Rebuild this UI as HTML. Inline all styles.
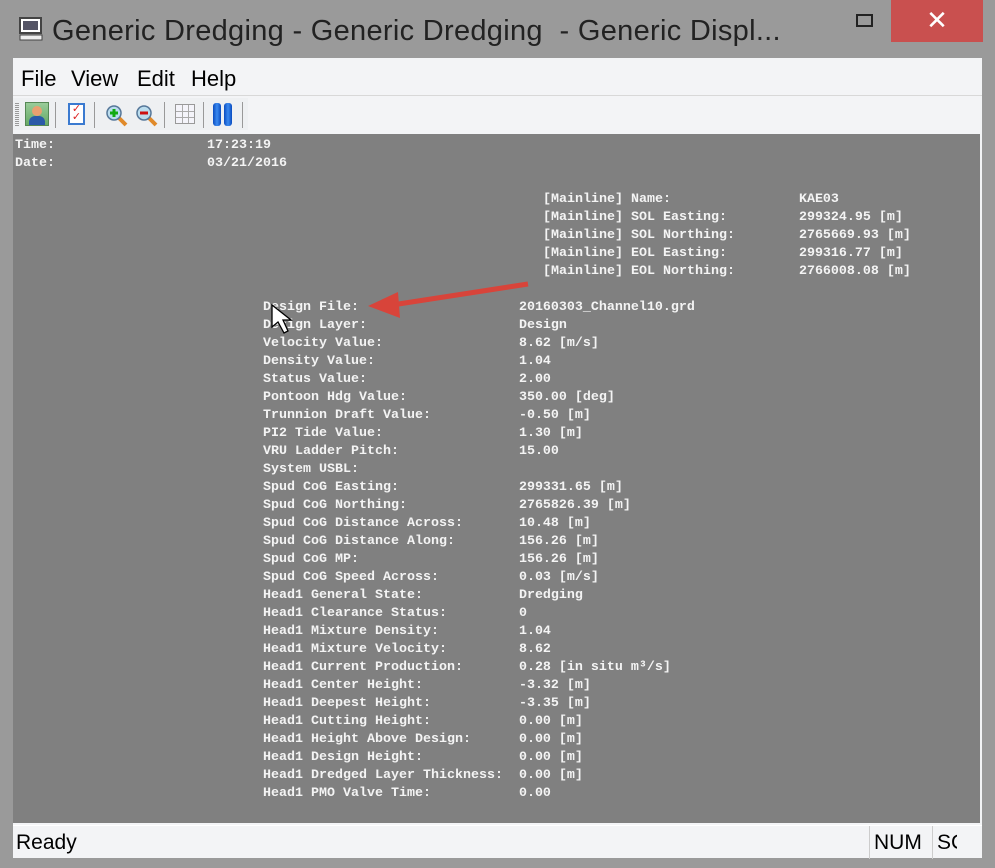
<!DOCTYPE html>
<html><head><meta charset="utf-8"><style>
*{margin:0;padding:0;box-sizing:border-box}
body{width:995px;height:868px;background:#9a9a9a;position:relative;overflow:hidden;font-family:"Liberation Sans",sans-serif}
.title{position:absolute;left:52px;top:15px;font-size:29px;color:#222;white-space:nowrap;letter-spacing:0.3px}
.close{position:absolute;left:891px;top:0;width:92px;height:42px;background:#c9504f;color:#fff;font-size:26px;text-align:center;line-height:40px}
.max{position:absolute;left:856px;top:14px;width:17px;height:13px;border:2px solid #222}
.client{position:absolute;left:13px;top:58px;width:969px;height:800px;background:#f3f4f6}
.menu{position:absolute;left:13px;top:58px;width:969px;height:38px;border-bottom:1px solid #d8d8d8;font-size:22px;color:#000}
.menu span{position:absolute;top:8px}
.tb{position:absolute;left:13px;top:98px;width:235px;height:32px;background:#eef0f2}
.content{position:absolute;left:13px;top:134px;width:967px;height:689px;background:#808080;font-family:"Liberation Mono",monospace;font-weight:bold;font-size:13.33px;color:#f4f4f4;white-space:pre}
.l{position:absolute;line-height:18px}
.status{position:absolute;left:13px;top:825px;width:969px;height:33px;background:#f3f4f6;border-top:1px solid #fff;font-size:21px}
.sep{position:absolute;top:4px;width:1px;height:26px;background:#999}
</style></head><body>
<svg style="position:absolute;left:19px;top:16px" width="24" height="26"><rect x="1" y="2" width="21" height="15" fill="#fff" stroke="#444" stroke-width="2"/><rect x="4" y="5" width="15" height="9" fill="#556"/><rect x="1" y="19" width="22" height="5" fill="#eee" stroke="#444"/></svg>
<div class="title">Generic Dredging - Generic Dredging&nbsp; - Generic Displ...</div>
<div class="max"></div>
<div class="close">✕</div>
<div class="client"></div>
<div class="menu"><span style="left:8px">File</span><span style="left:58px">View</span><span style="left:124px">Edit</span><span style="left:178px">Help</span></div>
<div class="tb">
<div style="position:absolute;left:2px;top:5px;width:4px;height:24px;background:repeating-linear-gradient(#999 0 1px,transparent 1px 2px)"></div>
<div style="position:absolute;left:12px;top:4px;width:24px;height:24px;background:linear-gradient(#9c9,#6a6);border:1px solid #585"><div style="position:absolute;left:6px;top:3px;width:10px;height:10px;border-radius:50%;background:#e9a070"></div><div style="position:absolute;left:3px;top:13px;width:16px;height:9px;border-radius:6px 6px 0 0;background:#2a5aa8"></div></div>
<div class="sep" style="left:42px"></div>
<div style="position:absolute;left:55px;top:5px;width:17px;height:22px;background:#fff;border:2px solid #3a7ad0;color:#d22;font-size:11px;line-height:8px;text-align:center">✓<br>✓</div>
<div class="sep" style="left:81px"></div>
<svg style="position:absolute;left:92px;top:6px" width="24" height="24"><line x1="12" y1="12" x2="21" y2="21" stroke="#e08a2a" stroke-width="4"/><circle cx="9" cy="9" r="7" fill="#bde" stroke="#579" stroke-width="1.5"/><path d="M9 5v8M5 9h8" stroke="#1a1" stroke-width="3"/></svg>
<svg style="position:absolute;left:122px;top:6px" width="24" height="24"><line x1="12" y1="12" x2="21" y2="21" stroke="#e08a2a" stroke-width="4"/><circle cx="9" cy="9" r="7" fill="#bde" stroke="#579" stroke-width="1.5"/><path d="M5 9h8" stroke="#c11" stroke-width="3"/></svg>
<div class="sep" style="left:151px"></div>
<div style="position:absolute;left:162px;top:6px;width:20px;height:20px;border:1px solid #999;background:linear-gradient(90deg,transparent 6px,#aaa 6px 7px,transparent 7px 12px,#aaa 12px 13px,transparent 13px),linear-gradient(transparent 6px,#aaa 6px 7px,transparent 7px 12px,#aaa 12px 13px,transparent 13px),#f4f4fa"></div>
<div class="sep" style="left:190px"></div>
<div style="position:absolute;left:200px;top:5px;width:8px;height:23px;border-radius:3px;background:linear-gradient(90deg,#0a4cc0,#3a8af0,#0a4cc0)"></div>
<div style="position:absolute;left:211px;top:5px;width:8px;height:23px;border-radius:3px;background:linear-gradient(90deg,#0a4cc0,#3a8af0,#0a4cc0)"></div>
<div class="sep" style="left:229px"></div>
</div>
<div class="content">
<div class="l" style="left:2px;top:3px">Time:                   17:23:19
Date:                   03/21/2016</div>
<div class="l" style="left:530px;top:57px">[Mainline] Name:                KAE03
[Mainline] SOL Easting:         299324.95 [m]
[Mainline] SOL Northing:        2765669.93 [m]
[Mainline] EOL Easting:         299316.77 [m]
[Mainline] EOL Northing:        2766008.08 [m]</div>
<div class="l" style="left:250px;top:165px">Design File:                    20160303_Channel10.grd
Design Layer:                   Design
Velocity Value:                 8.62 [m/s]
Density Value:                  1.04
Status Value:                   2.00
Pontoon Hdg Value:              350.00 [deg]
Trunnion Draft Value:           -0.50 [m]
PI2 Tide Value:                 1.30 [m]
VRU Ladder Pitch:               15.00
System USBL:
Spud CoG Easting:               299331.65 [m]
Spud CoG Northing:              2765826.39 [m]
Spud CoG Distance Across:       10.48 [m]
Spud CoG Distance Along:        156.26 [m]
Spud CoG MP:                    156.26 [m]
Spud CoG Speed Across:          0.03 [m/s]
Head1 General State:            Dredging
Head1 Clearance Status:         0
Head1 Mixture Density:          1.04
Head1 Mixture Velocity:         8.62
Head1 Current Production:       0.28 [in situ m³/s]
Head1 Center Height:            -3.32 [m]
Head1 Deepest Height:           -3.35 [m]
Head1 Cutting Height:           0.00 [m]
Head1 Height Above Design:      0.00 [m]
Head1 Design Height:            0.00 [m]
Head1 Dredged Layer Thickness:  0.00 [m]
Head1 PMO Valve Time:           0.00</div>
</div>
<svg style="position:absolute;left:0;top:0" width="995" height="868">
<path d="M528 284 L392 305" stroke="#d8443a" stroke-width="5"/>
<path d="M368 306 L398 292 L400 318 Z" fill="#d8443a"/>
<path d="M272 305 L272 327 L278 322 L284 333 L288 331 L283 320 L291 320 Z" fill="#fff" stroke="#000" stroke-width="1.3"/>
</svg>
<div class="status"><span style="position:absolute;left:3px;top:5px">Ready</span>
<div style="position:absolute;left:856px;top:0;width:1px;height:33px;background:#ccc"></div><span style="position:absolute;left:861px;top:5px">NUM</span>
<div style="position:absolute;left:919px;top:0;width:1px;height:33px;background:#ccc"></div><span style="position:absolute;left:924px;top:5px;width:20px;overflow:hidden;white-space:nowrap">SCRL</span></div>
</body></html>
